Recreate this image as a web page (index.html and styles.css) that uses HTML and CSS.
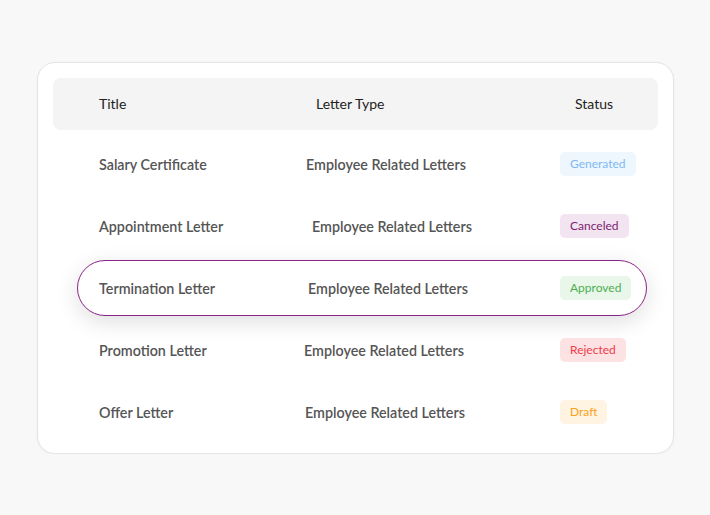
FILE: index.html
```html
<!DOCTYPE html>
<html lang="en">
<head>
<meta charset="utf-8">
<title>Letters</title>
<link rel="stylesheet" href="styles.css">
</head>
<body>
<div class="card">
  <div class="head">
    <div class="h-title">Title</div>
    <div class="h-type">Letter Type</div>
    <div class="h-status">Status</div>
  </div>
  <div class="rows">
    <div class="row">
      <div class="title">Salary Certificate</div>
      <div class="type">Employee Related Letters</div>
      <div><span class="badge generated">Generated</span></div>
    </div>
    <div class="row">
      <div class="title">Appointment Letter</div>
      <div class="type shift-6">Employee Related Letters</div>
      <div><span class="badge canceled">Canceled</span></div>
    </div>
    <div class="row active">
      <div class="pill">
        <div class="title">Termination Letter</div>
        <div class="type shift-2">Employee Related Letters</div>
        <div><span class="badge approved">Approved</span></div>
      </div>
    </div>
    <div class="row">
      <div class="title">Promotion Letter</div>
      <div class="type shift-m2">Employee Related Letters</div>
      <div><span class="badge rejected">Rejected</span></div>
    </div>
    <div class="row">
      <div class="title">Offer Letter</div>
      <div class="type shift-m1">Employee Related Letters</div>
      <div><span class="badge draft">Draft</span></div>
    </div>
  </div>
</div>
</body>
</html>
```
FILE: styles.css
```css
* { box-sizing: border-box; }
html, body { margin: 0; }
body {
  background: #f8f8f8;
  font-family: Lato, "Open Sans", sans-serif;
  padding: 62px 0 0 37px;
}
.card {
  width: 637px;
  height: 392px;
  background: #fff;
  border: 1px solid #e4e4e4;
  border-radius: 18px;
  box-shadow: 0 1px 3px rgba(0,0,0,0.04);
  padding: 15px 15px 11px 15px;
}
.head {
  height: 52px;
  background: #f4f4f4;
  border-radius: 8px;
  display: grid;
  grid-template-columns: 217px 259px auto;
  align-items: center;
  padding: 0 0 1px 46px;
  font-size: 14px;
  color: #222;
}
.rows { margin-top: 3px; }
.row {
  height: 62px;
  display: grid;
  grid-template-columns: 207px 254px auto;
  align-items: center;
  padding-left: 46px;
}
.title, .type {
  font-size: 14.3px;
  font-weight: 600;
  color: #555;
}
.shift-6 { margin-left: 6px; }
.shift-2 { margin-left: 2px; }
.shift-m2 { margin-left: -2px; }
.shift-m1 { margin-left: -1px; }
.row.active {
  display: flex;
  align-items: center;
  padding-left: 24px;
}
.pill {
  width: 570px;
  height: 56px;
  border: 1px solid #8a2387;
  border-radius: 28px;
  background: #fff;
  box-shadow: 0 6px 22px rgba(0,0,0,0.13);
  display: grid;
  grid-template-columns: 207px 254px auto;
  align-items: center;
  padding-left: 21px;
}
.badge {
  display: inline-block;
  height: 24px;
  line-height: 24px;
  padding: 0 10px;
  border-radius: 5px;
  font-size: 12px;
}
.generated { background: #eef6fe; color: #7db9f3; }
.canceled { background: #f3e4f1; color: #7b1f70; }
.approved { background: #e9f6ea; color: #4caf50; }
.rejected { background: #fde2e4; color: #ef3b47; }
.draft { background: #fff3e1; color: #f8a320; }
```
